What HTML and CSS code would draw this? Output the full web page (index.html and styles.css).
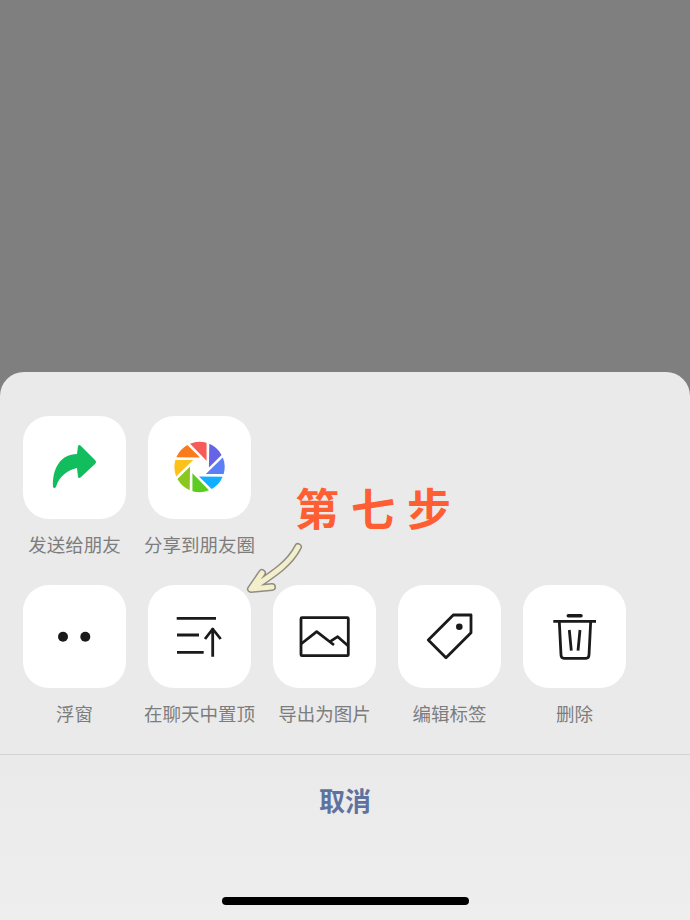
FILE: index.html
```html
<!DOCTYPE html>
<html lang="zh-CN">
<head>
	<meta charset="utf-8" />
	<title>第七步</title>
	<link rel="stylesheet" href="styles.css">
</head>
<body>
<div class="mask"></div>
<div class="sheet">
	<div class="actions">
		<div class="row">
			<div class="item">
				<div class="tile">
					<svg viewBox="0 0 103 103">
						<path class="fill-green" d="M55 30Q56 28 58 30L72 44Q74 46 72 48L58 61Q56 63 55 61L54 52C45 54 36 60 33 71Q31 73 30 71C29 52 38 38 54 38Z"/>
					</svg>
				</div>
				<span class="label">发送给朋友</span>
			</div>
			<div class="item">
				<div class="tile">
					<svg viewBox="0 0 103 103">
						<g transform="translate(51.5 51) scale(1.05)">
							<path fill="#f85a5a" d="M-9 -22.2A24 24 0 0 1 6.7 -23L6.7 -6Z"/>
							<path fill="#6563e6" transform="rotate(45)" d="M-9 -22.2A24 24 0 0 1 6.7 -23L6.7 -6Z"/>
							<path fill="#5b7ff5" transform="rotate(90)" d="M-9 -22.2A24 24 0 0 1 6.7 -23L6.7 -6Z"/>
							<path fill="#12aeff" transform="rotate(135)" d="M-9 -22.2A24 24 0 0 1 6.7 -23L6.7 -6Z"/>
							<path fill="#5dcb1f" transform="rotate(180)" d="M-9 -22.2A24 24 0 0 1 6.7 -23L6.7 -6Z"/>
							<path fill="#8cc620" transform="rotate(225)" d="M-9 -22.2A24 24 0 0 1 6.7 -23L6.7 -6Z"/>
							<path fill="#fdc21a" transform="rotate(270)" d="M-9 -22.2A24 24 0 0 1 6.7 -23L6.7 -6Z"/>
							<path fill="#fb7a1c" transform="rotate(315)" d="M-9 -22.2A24 24 0 0 1 6.7 -23L6.7 -6Z"/>
						</g>
					</svg>
				</div>
				<span class="label">分享到朋友圈</span>
			</div>
		</div>
		<div class="row">
			<div class="item">
				<div class="tile">
					<svg viewBox="0 0 103 103">
						<circle class="fill-dark" cx="40" cy="51.7" r="5"/>
						<circle class="fill-dark" cx="62.3" cy="51.7" r="5"/>
					</svg>
				</div>
				<span class="label">浮窗</span>
			</div>
			<div class="item">
				<div class="tile">
					<svg viewBox="0 0 103 103">
						<path class="line" d="M28.7 33.3H68M29 50H51M29 67.3H55.7M64.7 43V71.7M57 54L64.7 44L72.7 54"/>
					</svg>
				</div>
				<span class="label">在聊天中置顶</span>
			</div>
			<div class="item">
				<div class="tile">
					<svg viewBox="0 0 103 103">
						<rect class="line" x="28" y="32.7" width="47.3" height="38" rx="1"/>
						<path class="line" d="M28 59L43.7 46.7L61 60M57 56.7L64.7 51.7L75.3 61"/>
					</svg>
				</div>
				<span class="label">导出为图片</span>
			</div>
			<div class="item">
				<div class="tile">
					<svg viewBox="0 0 103 103">
						<path class="line" d="M55.3 30H73V47.7L48 72.7L30.3 55Z"/>
						<circle class="fill-dark" cx="61.3" cy="41.7" r="3.3"/>
					</svg>
				</div>
				<span class="label">编辑标签</span>
			</div>
			<div class="item">
				<div class="tile">
					<svg viewBox="0 0 103 103">
						<path class="line" d="M30.3 36.3H73M36.3 36.3L38 70Q38.2 73.3 41 73.3H63Q65.8 73.3 66 70L67.7 36.3M46.3 45L48.3 65.7M57 45L55 65.7"/>
						<path class="line thick" d="M45.3 30.7H58"/>
					</svg>
				</div>
				<span class="label">删除</span>
			</div>
		</div>
	</div>
	<div class="cancel">取消</div>
	<div class="home-bar"></div>

	<!-- 手写标注 -->
	<div class="note">第七步</div>
	<svg class="note-arrow" viewBox="0 0 70 65">
		<path class="arrow-edge" d="M58 12C50 28 35 38 14 52M22 38L11 54L32 52"/>
		<path class="arrow-core" d="M58 12C50 28 35 38 14 52M22 38L11 54L32 52"/>
	</svg>
</div>
</body>
</html>
```

FILE: styles.css
```css
*{
margin:0;
padding:0;
border:0;
box-sizing:border-box;}
body{
width:690px;
height:920px;
background:#7f7f7f;
overflow:hidden;
display:flex;
flex-direction:column;
font-family:"Noto Sans CJK SC","Liberation Sans",sans-serif;
}
.mask{
height:372px;
background:#7f7f7f;
}
.sheet{
flex:1;
position:relative;
background:linear-gradient(#eaeaea 0,#eaeaea 70%,#eeeeee 100%);
border-radius:24px 24px 0 0;
display:flex;
flex-direction:column;
}
.actions{
padding:44px 0 0 12px;
border-bottom:1px solid #d4d4d4;
}
.row{
display:flex;
height:169px;
}
.item{
width:125px;
display:flex;
flex-direction:column;
align-items:center;
}
.tile{
width:103px;
height:103px;
background:#fff;
border-radius:26px;
}
.tile svg{
width:103px;
height:103px;
display:block;
}
.label{
margin-top:12px;
height:26px;
line-height:26px;
font-size:18.5px;
color:#7d7d7d;
white-space:nowrap;
}
.fill-green{
fill:#12bd5e;
}
.fill-dark{
fill:#1a1a1a;
}
.line{
fill:none;
stroke:#1a1a1a;
stroke-width:2.8;
stroke-linejoin:round;
}
.thick{
stroke-width:3.5;
stroke-linecap:round;
}
.cancel{
height:90px;
line-height:90px;
text-align:center;
font-size:26px;
font-weight:700;
color:#5f729f;
}
.home-bar{
width:247px;
height:8px;
margin:52px 0 0 222px;
background:#000;
border-radius:4px;
}
.note{
position:absolute;
left:295px;
top:102px;
font-size:44px;
line-height:66px;
font-weight:700;
letter-spacing:12px;
color:#ff5e33;
white-space:nowrap;
}
.note-arrow{
position:absolute;
left:240px;
top:163px;
width:70px;
height:65px;
}
.arrow-edge,.arrow-core{
fill:none;
stroke-linecap:round;
stroke-linejoin:round;
}
.arrow-edge{
stroke:#8f8c80;
stroke-width:8;
}
.arrow-core{
stroke:#f3eecb;
stroke-width:5;
}
```
